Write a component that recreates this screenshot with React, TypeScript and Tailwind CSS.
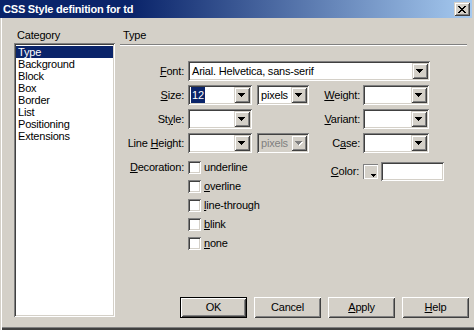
import type { ReactNode } from 'react';

const sunken =
  'shadow-[inset_1px_1px_0_#808080,inset_-1px_-1px_0_#ffffff,inset_2px_2px_0_#404040,inset_-2px_-2px_0_#d4d0c8]';
const raised =
  'shadow-[inset_1px_1px_0_#d4d0c8,inset_-1px_-1px_0_#404040,inset_2px_2px_0_#ffffff,inset_-2px_-2px_0_#808080]';
const buttonBevel =
  'shadow-[inset_1px_1px_0_#ffffff,inset_-1px_-1px_0_#404040,inset_2px_2px_0_#d4d0c8,inset_-2px_-2px_0_#808080]';

const categories = ['Type', 'Background', 'Block', 'Box', 'Border', 'List', 'Positioning', 'Extensions'];

function Arrow({ disabled }: { disabled?: boolean }) {
  const rows = [
    [0, 7],
    [1, 5],
    [2, 3],
    [3, 1],
  ];
  return (
    <svg width="8" height="5" viewBox="0 0 8 5" shapeRendering="crispEdges">
      {disabled &&
        rows.map(([x, w], i) => <rect key={'s' + i} x={x + 1} y={i + 1} width={w} height={1} fill="#ffffff" />)}
      {rows.map(([x, w], i) => (
        <rect key={i} x={x} y={i} width={w} height={1} fill={disabled ? '#808080' : '#000000'} />
      ))}
    </svg>
  );
}

function Combo({
  className,
  value,
  selected,
  disabled,
}: {
  className: string;
  value?: string;
  selected?: boolean;
  disabled?: boolean;
}) {
  return (
    <div
      className={`flex h-[20px] p-[2px] ${disabled ? 'bg-[#d4d0c8]' : 'bg-white'} ${sunken} ${className}`}
    >
      <div className="flex min-w-0 flex-1 items-center pl-[1px] leading-[16px]">
        {value && (
          <span
            className={
              selected
                ? 'bg-[#0a246a] px-[1px] text-white'
                : disabled
                  ? 'px-[1px] text-[#808080]'
                  : 'px-[1px]'
            }
          >
            {value}
          </span>
        )}
      </div>
      <div className={`flex h-[16px] w-[16px] items-center justify-center bg-[#d4d0c8] pt-[1px] ${raised}`}>
        <Arrow disabled={disabled} />
      </div>
    </div>
  );
}

function Checkbox({ label }: { label: ReactNode }) {
  return (
    <div className="flex h-[13px] items-center">
      <div className={`h-[13px] w-[13px] bg-white ${sunken}`} />
      <span className="ml-[3px] leading-[13px]">{label}</span>
    </div>
  );
}

function Label({ children, className }: { children: ReactNode; className: string }) {
  return <div className={`shrink-0 text-right ${className}`}>{children}</div>;
}

function Button({ children, isDefault }: { children: ReactNode; isDefault?: boolean }) {
  return (
    <div
      className={`flex h-[21px] w-[67px] items-center justify-center bg-[#d4d0c8] ${
        isDefault ? 'border border-black' : ''
      } ${buttonBevel}`}
    >
      {children}
    </div>
  );
}

function CloseGlyph() {
  const px: [number, number][] = [];
  for (let i = 0; i < 7; i++) {
    px.push([i, i], [i + 1, i], [6 - i, i], [7 - i, i]);
  }
  return (
    <svg width="8" height="7" viewBox="0 0 8 7" shapeRendering="crispEdges">
      {px.map(([x, y], i) => (
        <rect key={i} x={x} y={y} width={1} height={1} fill="#000000" />
      ))}
    </svg>
  );
}

export default function App() {
  return (
    <div className="relative h-[330px] w-[474px] overflow-hidden bg-[#d4d0c8] font-['Liberation_Sans',Arial,sans-serif] text-[11px] tracking-[-0.2px] text-black shadow-[inset_1px_0_0_#d4d0c8,inset_2px_0_0_#ffffff,inset_0_-2px_0_#404040,inset_0_-3px_0_#808080]">
      {/* title bar */}
      <div className="flex h-[18px] w-[472px] items-center justify-between bg-[linear-gradient(90deg,#0a246a_28%,#a6caf0_100%)] pl-[3px] pr-[2px]">
        <span className="text-[11px] font-bold tracking-[-0.2px] text-white">CSS Style definition for td</span>
        <div className={`flex h-[14px] w-[16px] items-center justify-center bg-[#d4d0c8] ${raised}`}>
          <CloseGlyph />
        </div>
      </div>

      <div className="flex pl-[14px]">
        {/* category */}
        <div className="flex w-[101px] shrink-0 flex-col">
          <div className="mt-[11px] h-[12px] pl-[3px] leading-[12px]">Category</div>
          <div className={`mt-[2px] h-[274px] bg-white p-[2px] pt-[3px] ${sunken}`}>
            {categories.map((c, i) => (
              <div
                key={c}
                className={`h-[12px] pl-[2px] leading-[12px] ${i === 0 ? 'bg-[#0a246a] text-white' : ''}`}
              >
                {c}
              </div>
            ))}
          </div>
        </div>

        {/* type panel */}
        <div className="ml-[5px] flex w-[349px] flex-col">
          <div className="mt-[11px] h-[12px] pl-[3px] leading-[12px]">Type</div>
          <div className="mt-[3px] h-[2px] w-[347px] border-t border-b border-t-[#808080] border-b-white" />

          <div className="mt-[15px] flex h-[20px] items-center">
            <Label className="w-[68px] pr-[4px]">
              <u>F</u>ont:
            </Label>
            <Combo className="w-[242px]" value="Arial. Helvetica, sans-serif" />
          </div>

          <div className="mt-[4px] flex h-[20px] items-center">
            <Label className="w-[68px] pr-[4px]">
              <u>S</u>ize:
            </Label>
            <Combo className="w-[64px]" value="12" selected />
            <Combo className="ml-[5px] w-[52px]" value="pixels" />
            <Label className="w-[54px] pr-[3px]">
              <u>W</u>eight:
            </Label>
            <Combo className="w-[66px]" />
          </div>

          <div className="mt-[4px] flex h-[20px] items-center">
            <Label className="w-[68px] pr-[4px]">
              St<u>y</u>le:
            </Label>
            <Combo className="w-[64px]" />
            <div className="w-[57px] shrink-0" />
            <Label className="w-[54px] pr-[3px]">
              <u>V</u>ariant:
            </Label>
            <Combo className="w-[66px]" />
          </div>

          <div className="mt-[4px] flex h-[20px] items-center">
            <Label className="w-[68px] pr-[4px]">
              Line <u>H</u>eight:
            </Label>
            <Combo className="w-[64px]" />
            <Combo className="ml-[5px] w-[52px]" value="pixels" disabled />
            <Label className="w-[54px] pr-[3px]">
              C<u>a</u>se:
            </Label>
            <Combo className="w-[66px]" />
          </div>

          <div className="mt-[8px] flex items-start">
            <Label className="w-[68px] pr-[4px] leading-[13px]">
              <u>D</u>ecoration:
            </Label>
            <div className="flex w-[121px] shrink-0 flex-col gap-[6px]">
              <Checkbox label="underline" />
              <Checkbox
                label={
                  <>
                    <u>o</u>verline
                  </>
                }
              />
              <Checkbox
                label={
                  <>
                    <u>l</u>ine-through
                  </>
                }
              />
              <Checkbox
                label={
                  <>
                    <u>b</u>link
                  </>
                }
              />
              <Checkbox
                label={
                  <>
                    <u>n</u>one
                  </>
                }
              />
            </div>
            <div className="mt-[1px] flex h-[19px] items-center">
              <Label className="w-[54px] pr-[4px]">
                <u>C</u>olor:
              </Label>
              <div className="relative h-[15px] w-[15px] bg-[#d4d0c8] shadow-[inset_1px_1px_0_#808080,inset_-1px_-1px_0_#ffffff,inset_2px_2px_0_#ffffff]">
                <div className="absolute right-[2px] bottom-[2px]">
                  <svg width="5" height="3" viewBox="0 0 5 3" shapeRendering="crispEdges">
                    <rect x="0" y="0" width="5" height="1" fill="#000" />
                    <rect x="1" y="1" width="3" height="1" fill="#000" />
                    <rect x="2" y="2" width="1" height="1" fill="#000" />
                  </svg>
                </div>
              </div>
              <div className={`ml-[3px] h-[19px] w-[63px] bg-white ${sunken}`} />
            </div>
          </div>

          <div className="mt-[47px] flex gap-[7px] pl-[60px]">
            <Button isDefault>OK</Button>
            <Button>Cancel</Button>
            <Button>
              <span>
                <u>A</u>pply
              </span>
            </Button>
            <Button>
              <span>
                <u>H</u>elp
              </span>
            </Button>
          </div>
        </div>
      </div>
    </div>
  );
}
